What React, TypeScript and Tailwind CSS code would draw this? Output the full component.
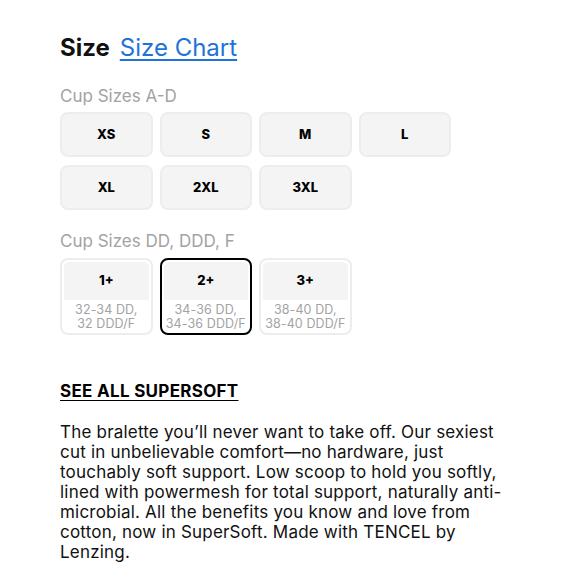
import React from 'react'

const cupAD = ['XS', 'S', 'M', 'L', 'XL', '2XL', '3XL']

const cupPlus = [
  { label: '1+', sub: ['32-34 DD,', '32 DDD/F'], selected: false },
  { label: '2+', sub: ['34-36 DD,', '34-36 DDD/F'], selected: true },
  { label: '3+', sub: ['38-40 DD,', '38-40 DDD/F'], selected: false },
]

export default function App() {
  return (
    <div className="min-h-[580px] w-[580px] bg-white px-[60px] pt-[32px] font-['Inter',sans-serif] text-[#111]">
      {/* Heading */}
      <div className="flex items-baseline gap-[10px] leading-[32px]">
        <h2 className="text-[24px] font-bold">Size</h2>
        <a href="#" className="text-[24px] text-[#1f73d8] underline underline-offset-[3px] decoration-[1.5px]">Size Chart</a>
      </div>

      <p className="mt-[20px] text-[17px] leading-[24px] text-[#a3a3a3]">Cup Sizes A-D</p>

      <div className="mt-[4px] grid w-[391px] grid-cols-4 gap-x-[7px] gap-y-[8px]">
        {cupAD.map(s => (
          <button key={s} className="h-[45px] rounded-lg border-2 border-[#ededed] bg-[#f4f4f4] text-[13px] font-extrabold text-black">
            {s}
          </button>
        ))}
      </div>

      <p className="mt-[19px] text-[17px] leading-[24px] text-[#a3a3a3]">Cup Sizes DD, DDD, F</p>

      {/* Cup sizes with band ranges */}
      <div className="mt-[5px] grid w-[391px] grid-cols-4 gap-x-[7px]">
        {cupPlus.map(c => (
          <button
            key={c.label}
            className={`flex h-[77px] flex-col overflow-hidden rounded-lg border-2 p-[2px] ${c.selected ? 'border-black' : 'border-[#ededed]'}`}
          >
            <span className="flex h-[38px] w-full shrink-0 items-center justify-center rounded-t-[5px] bg-[#f4f4f4] text-[13px] font-extrabold text-black">
              {c.label}
            </span>
            <span className="flex w-full flex-1 flex-col items-center justify-center pt-[2px] text-[12.5px] leading-[14px] tracking-[0.1px] text-[#a3a3a3]">
              {c.sub.map(l => <span key={l}>{l}</span>)}
            </span>
          </button>
        ))}
      </div>

      <a href="#" className="mt-[44px] block w-fit text-[17px] font-bold leading-[24px] tracking-[0.3px] text-black underline underline-offset-[3px]">
        SEE ALL SUPERSOFT
      </a>

      <p className="mt-[19px] text-[17px] leading-[20px] tracking-[0.2px] text-[#111]">
        The bralette you’ll never want to take off. Our sexiest cut in unbelievable comfort—no hardware, just touchably soft support. Low scoop to hold you softly, lined with powermesh for total support, naturally anti-microbial. All the benefits you know and love from cotton, now in SuperSoft. Made with TENCEL by Lenzing.
      </p>
    </div>
  )
}
